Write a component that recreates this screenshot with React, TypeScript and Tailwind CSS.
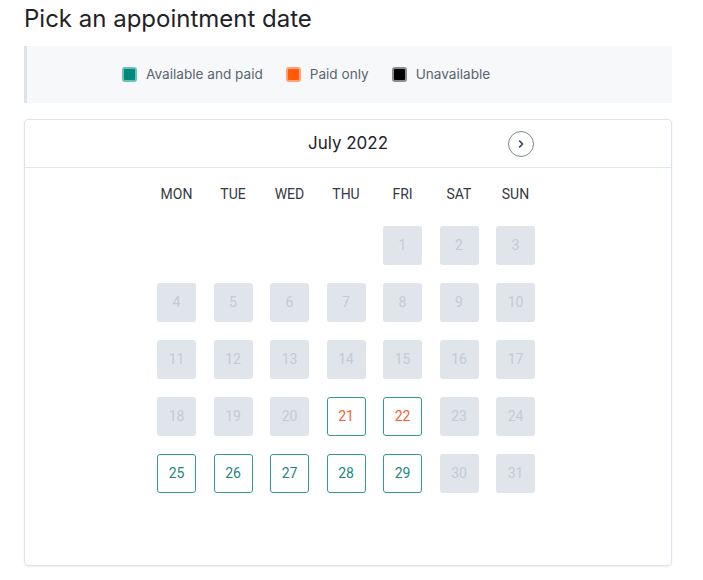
const weekdays = ["MON", "TUE", "WED", "THU", "FRI", "SAT", "SUN"]

type DayState = "off" | "open" | "paid"

function dayState(day: number): DayState {
  if (day === 21 || day === 22) return "paid"
  if (day >= 25 && day <= 29) return "open"
  return "off"
}

function LegendItem({ color, border, label }: { color: string; border: string; label: string }) {
  return (
    <div className="flex items-center gap-[9px]">
      <span className={`h-[15px] w-[15px] rounded-[3px] border-2 ${border} ${color}`} />
      <span className="text-[13.6px] text-[#5b6470]">{label}</span>
    </div>
  )
}

export default function App() {
  // July 2022 starts on a Friday
  const cells: (number | null)[] = [null, null, null, null]
  for (let d = 1; d <= 31; d++) cells.push(d)

  return (
    <div className="min-h-[580px] bg-white px-6 pt-[4px] font-['Inter',sans-serif] text-[#1f2328]">
      <h1 className="text-[24px] leading-[29px]">Pick an appointment date</h1>

      <div className="mt-[13px] flex h-[57px] w-[648px] items-center gap-[23px] border-l-[3px] border-[#dce3ea] bg-[#f6f8fa] pl-[95px]">
        <LegendItem color="bg-[#00897b]" border="border-[#6cc0b6]" label="Available and paid" />
        <LegendItem color="bg-[#ff5a0a]" border="border-[#ffa47a]" label="Paid only" />
        <LegendItem color="bg-black" border="border-[#8b8b8b]" label="Unavailable" />
      </div>

      <div className="mt-4 h-[447px] w-[648px] rounded-[4px] border border-[#dde3ea] shadow-[0_1px_2px_rgba(30,50,80,0.08)]">
        <div className="relative flex h-[48px] items-center justify-center border-b border-[#e3e8ee]">
          <span className="text-[17px] text-[#1f2328]">July 2022</span>
          <button className="absolute left-[483px] top-[11px] flex h-[26px] w-[26px] items-center justify-center rounded-full border-[1.5px] border-[#7b8794]">
            <svg width="12" height="12" viewBox="0 0 12 12" fill="none">
              <path d="M4.6 3 L7.5 6 L4.6 9" stroke="#2a4060" strokeWidth="1.6" strokeLinecap="round" strokeLinejoin="round" />
            </svg>
          </button>
        </div>

        <div className="flex flex-col items-center pr-[4px] pt-[18px] font-['Roboto',sans-serif]">
          <div className="grid grid-cols-[repeat(7,39px)] gap-x-[17.5px]">
            {weekdays.map((w) => (
              <div key={w} className="-mx-2 h-[17px] text-center text-[14px] leading-[17px] text-[#333a42]">
                {w}
              </div>
            ))}
          </div>
          <div className="mt-[23px] grid grid-cols-[repeat(7,39px)] gap-x-[17.5px] gap-y-[18px]">
            {cells.map((day, i) => {
              if (day === null) return <div key={`e${i}`} className="h-[39px] w-[39px]" />
              const state = dayState(day)
              if (state === "off") {
                return (
                  <div
                    key={day}
                    className="flex h-[39px] w-[39px] items-center justify-center rounded-[3px] bg-[#dfe5eb] text-[14px] text-[#c4cbd3]"
                  >
                    {day}
                  </div>
                )
              }
              return (
                <button
                  key={day}
                  className={`flex h-[39px] w-[39px] items-center justify-center rounded-[3px] border border-[#2f9b90] bg-white text-[14px] ${
                    state === "paid" ? "text-[#f4622e]" : "text-[#21877d]"
                  }`}
                >
                  {day}
                </button>
              )
            })}
          </div>
        </div>
      </div>
    </div>
  )
}
